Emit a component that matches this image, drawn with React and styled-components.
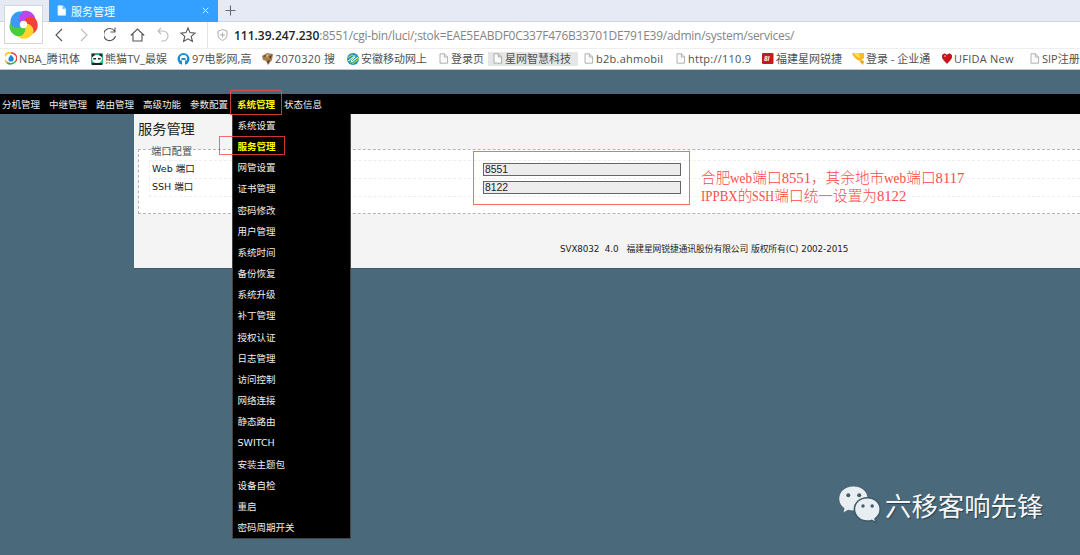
import React from "react";
import styled, { createGlobalStyle } from "styled-components";

const GlobalStyle = createGlobalStyle`
  * {
    box-sizing: border-box;
  }

  body {
    margin: 0;
    overflow: hidden;
    background: #4a6a7b;
  }
`;

const uiFont = `"Open Sans", "Noto Sans CJK SC", sans-serif`;
const pageFont = `"DejaVu Sans", "Noto Sans CJK SC", sans-serif`;

const Screen = styled.div`
  position: relative;
  width: 1080px;
  height: 555px;
  overflow: hidden;
  white-space: nowrap;
  color: #222;
  font-family: ${pageFont};
`;

/* ---------- browser chrome ---------- */

const Chrome = styled.header`
  height: 70px;
  background: #fff;
  border-bottom: 1px solid #bfc7cc;
  font-family: ${uiFont};
`;

const TabStrip = styled.div`
  display: flex;
  align-items: center;
  height: 22px;
  padding-left: 49px;
  background: #e6eaf4;
  border-bottom: 1px solid #d2d6e4;
`;

const Tab = styled.div`
  display: flex;
  align-items: center;
  width: 169px;
  height: 22px;
  padding: 0 9px 0 8px;
  background: #339fff;
  color: #fff;
  font-size: 11px;
`;

const TabTitle = styled.span`
  flex: 1;
  margin-left: 4px;
`;

const NewTab = styled.svg`
  margin-left: 7px;
`;

const BrowserLogo = styled.div`
  position: absolute;
  top: 5px;
  left: 4px;
  display: grid;
  place-items: center;
  width: 39px;
  height: 39px;
  background: #fff;
  border: 1px solid #d4d7dc;
`;

const AddressRow = styled.div`
  display: flex;
  align-items: center;
  height: 27px;
  padding-left: 53px;
  border-bottom: 1px solid #eeeeee;
`;

const NavButtons = styled.div`
  display: flex;
  align-items: center;
  width: 155px;
  height: 26px;
  border-right: 1px solid #e4e4e4;
`;

const Address = styled.div`
  display: flex;
  align-items: center;
  padding-left: 9px;
  color: #858585;
  font-size: 12px;
  letter-spacing: -0.26px;

  b {
    margin-left: 6px;
    color: #222;
    font-weight: 600;
    letter-spacing: 0;
  }
`;

const Bookmarks = styled.div`
  display: flex;
  align-items: center;
  height: 20px;
  padding-left: 5px;
`;

const Bookmark = styled.div`
  display: flex;
  align-items: center;
  flex: none;
  width: ${(p) => p.$width}px;
  height: 20px;
  color: #505050;
  font-size: 11px;
  line-height: 18px;
  padding-bottom: 1px;
  letter-spacing: ${(p) => p.$spacing || 0}px;

  svg {
    flex: none;
    margin-right: 2px;
  }
`;

const ActiveMark = styled.div`
  display: flex;
  align-items: center;
  height: 14px;
  width: 90px;
  margin-left: -5px;
  padding-left: 5px;
  background: #e6e6e6;
`;

/* ---------- admin page ---------- */

const NavBar = styled.nav`
  display: flex;
  align-items: center;
  height: 20px;
  margin-top: 24px;
  padding: 1px 0 0 2px;
  background: #000;
  color: #eee;
  font-size: 9.5px;
`;

const NavItem = styled.div`
  position: relative;
  width: 47px;
  line-height: 19px;
  color: ${(p) => (p.$active ? "#ffff00" : "#eee")};
  font-weight: ${(p) => (p.$active ? 700 : 400)};
`;

const Dropdown = styled.div`
  position: absolute;
  top: 19px;
  left: -5px;
  z-index: 2;
  width: 119px;
  height: 425px;
  border: 1px solid #444;
  border-top: 0;
  background: #000;
`;

const MenuItem = styled.div`
  height: 21.17px;
  padding: 1px 0 0 4.5px;
  line-height: 21px;
  font-weight: ${(p) => (p.$active ? 700 : 400)};
  color: ${(p) => (p.$active ? "#ffff00" : "#eee")};
`;

const Content = styled.main`
  height: 155px;
  margin-left: 134px;
  padding-left: 4px;
  background: #f4f4f4;
  border-bottom: 1px solid #3f5967;
`;

const Title = styled.h1`
  height: 35px;
  margin: 0;
  line-height: 30px;
  font-size: 14.2px;
  font-weight: 400;
`;

const Section = styled.section`
  height: 65px;
  padding: 0 0 0 10px;
  border: 1px dashed #b4b4b4;
  border-right: 0;
  background: #fff;
`;

const Legend = styled.div`
  height: 10px;
  padding-left: 2px;
  line-height: 2px;
  color: #555;
  font-size: 10.3px;
`;

const Row = styled.div`
  display: grid;
  grid-template-columns: 331px 198px;
  align-items: center;
  height: 18px;
  padding-left: 2px;
  border-top: 1px dashed #eeeeee;
  border-left: 1px dashed #eeeeee;
  font-size: 9.5px;

  &:last-child {
    height: 19px;
    border-bottom: 1px dashed #eeeeee;
  }

  span {
    padding-bottom: 3px;
  }
`;

const Field = styled.input`
  width: 198px;
  height: 13px;
  padding: 0 0 1px 1px;
  border: 1px solid #666;
  border-radius: 0;
  background: #ededed;
  color: #222;
  font: 10.4px "Liberation Sans", sans-serif;
`;

const Footer = styled.footer`
  display: flex;
  padding: 28px 0 0 422px;
  font-size: 8.8px;
  letter-spacing: -0.1px;
  line-height: 14px;
  white-space: pre;
`;

/* ---------- notes drawn over the page ---------- */

const MarkBox = styled.div`
  position: absolute;
  z-index: 3;
  top: ${(p) => p.$top}px;
  left: ${(p) => p.$left}px;
  width: ${(p) => p.$width}px;
  height: ${(p) => p.$height}px;
  border: 1px solid rgba(250, 70, 70, 0.8);
`;

const Note = styled.div`
  position: absolute;
  top: 169px;
  left: 701px;
  color: #ff4a4a;
  font-family: "Liberation Serif", "Noto Sans CJK SC", serif;
  font-size: 14.67px;
  font-weight: 300;
  line-height: 18px;
`;

/* half-width letters: squeezed so that each one takes half an em */
const Latin = styled.span`
  display: inline-block;
  width: ${(p) => p.$width}px;
  transform: scaleX(${(p) => p.$scale});
  transform-origin: left;
`;

const Watermark = styled.div`
  position: absolute;
  top: 485px;
  left: 838px;
  display: flex;
  align-items: center;
  height: 39px;
  gap: 4px;
  color: #f4f6f7;
  font-family: "Noto Sans CJK SC", sans-serif;
  font-size: 26.4px;
  text-shadow: 1px 1px 1px #2c404b;
`;

/* ---------- icons ---------- */

const petalColors = ["#bb45ee", "#f5413c", "#ffd52e", "#48ce3b", "#3c9af5"];

const Pinwheel = () => (
  <svg width="31" height="31" viewBox="-16 -16 32 32">
    {petalColors.map((color, i) => (
      <path
        key={color}
        d="M-3.500 -1C-9 -5 -8 -14 1 -14.500C8 -14.500 11 -10 11.500 -6C7 -8.500 3 -7 0 -3.500Z"
        fill={color}
        transform={`rotate(${i * 72 + 8})`}
      />
    ))}
    <circle r="3.800" fill="#fff" />
  </svg>
);

const PageIcon = ({ filled }) => (
  <svg width="10" height="11" viewBox="0 0 10 11">
    <path
      d="M1 .8h4.5L8.6 4v6.2H1z M5.4 .8V4h3.2"
      fill={filled ? "#fff" : "#fafafa"}
      stroke={filled ? "#cfe6fb" : "#a8a8a8"}
      strokeWidth=".9"
    />
  </svg>
);

const Line = ({ width, d, color = "#555", offset = 0 }) => (
  <svg width={width} height="18" viewBox={`${-offset} 0 ${width} 18`}>
    <path d={d} fill="none" stroke={color} strokeWidth="1.1" />
  </svg>
);

const bookmarkIcons = {
  page: <PageIcon />,
  nba: (
    <svg width="12" height="13" viewBox="0 0 12 13">
      <path d="M6 1A5.2 5.2 0 0 0 2 10.5" fill="none" stroke="#f5c21b" strokeWidth="1.6" />
      <path d="M6 1a5.2 5.2 0 0 1 4 9" fill="none" stroke="#e5493a" strokeWidth="1.4" />
      <path d="M2 10.5q4 3 8 -.5" fill="none" stroke="#35a853" strokeWidth="1.6" />
      <path d="M6 3C9 5 9.5 8 7.500 9.500H4.500C2.500 8 3.500 5 6 3z" fill="#1787d8" />
    </svg>
  ),
  panda: (
    <svg width="12" height="12" viewBox="0 0 12 12">
      <rect width="12" height="12" rx="1" fill="#23b989" />
      <circle cx="2.500" cy="2.500" r="1.800" fill="#222" />
      <circle cx="9.500" cy="2.500" r="1.800" fill="#222" />
      <path d="M1 6.500q0-4.500 5-4.500t5 4.500q-1 3.500-5 3.500T1 6.500" fill="#fff" />
      <path d="M2.500 5h2.500v1.500H2.200zM7 5h2.500l.3 1.500H7zM1 10h10v2H1z" fill="#222" />
    </svg>
  ),
  film: (
    <svg width="13" height="12" viewBox="0 0 13 12">
      <circle cx="6.500" cy="6" r="6" fill="#168fd5" />
      <path d="M3 7V5q0-3 3.500-3T10 5v2L8.500 8V5h-4v3z" fill="#fff" />
      <path d="M5 7h3v5H5z" fill="#fff" />
    </svg>
  ),
  search: (
    <svg width="11" height="12" viewBox="0 0 11 12">
      <path d="M0 3l5-3 6 1-1 6-4 5-2-4-3-1z" fill="#a87d48" />
      <path d="M1 3l3-1-1 2zM7 3.500l3-1.500-1.500 4zM5 8l3-1-2 4z" fill="#444" />
      <path d="M4 2l3-1-2 4z" fill="#e9bd69" />
    </svg>
  ),
  mobile: (
    <svg width="12" height="12" viewBox="0 0 12 12">
      <circle cx="6" cy="6" r="6" fill="#168bd3" />
      <path d="M0 5l5-3 3 1-6 5M3 10l7-5 2 1-7 5" fill="none" stroke="#8bd14d" strokeWidth="1.500" />
      <path d="M1 8l5-4h2L4 8l1 1 6-5" fill="none" stroke="#fff" strokeWidth=".9" />
    </svg>
  ),
  ruijie: (
    <svg width="12" height="11" viewBox="0 0 12 11">
      <rect width="11.500" height="11" rx="1" fill="#c9191e" />
      <text x="2" y="8" fill="#fff" fontSize="6.500" fontWeight="700" fontStyle="italic">
        8i
      </text>
    </svg>
  ),
  trophy: (
    <svg width="12" height="12" viewBox="0 0 12 12">
      <path d="M0 0h12v5L8 8Q2 6 0 0z" fill="#ffb91e" />
      <path d="M2 0h5l1 5Q4 4 2 0" fill="#ffdf59" />
      <path d="M9 7l3 1-1 4-3-3z" fill="#e6a52f" />
    </svg>
  ),
  heart: (
    <svg width="10" height="11" viewBox="0 0 10 11">
      <path
        d="M5 10.500Q-1 5 .3 2.300 2 -.7 5 2.200 8-.7 9.700 2.300 11 5 5 10.500"
        fill="#d50f18"
        stroke="#6d1014"
        strokeWidth=".6"
      />
      <circle cx="3" cy="3" r="1" fill="#ff8888" />
    </svg>
  ),
};

const WeChat = () => (
  <svg width="43" height="39" viewBox="0 0 43 39">
    <g fill="#e8eef1" stroke="#405c6a" strokeWidth=".8">
      <path d="M15.500 1C7 1 .8 6.600 .8 13.700c0 4 2 7.400 5.300 9.700l-1.400 4.800 5.500-3c1.700.5 3.500.7 5.300.7C24 25.900 30 20.500 30 13.700S24 1 15.500 1z" />
      <path
        d="M29.300 12.700c-7.300 0-12.900 5-12.900 11.600s5.600 11.700 12.900 11.700c1.500 0 3-.2 4.300-.6l4.700 2.400-1.300-4c3.200-2.200 5.200-5.500 5.200-9.500 0-6.600-5.600-11.600-12.900-11.600z"
        strokeWidth="1.600"
      />
    </g>
    <g fill="#405c6a">
      <circle cx="10.300" cy="10.300" r="2" />
      <circle cx="21.200" cy="10.300" r="2" />
      <circle cx="25" cy="21" r="1.700" />
      <circle cx="34.200" cy="21" r="1.700" />
    </g>
  </svg>
);

/* ---------- data ---------- */

const bookmarks = [
  { icon: "nba", label: "NBA_腾讯体", width: 86, spacing: 0.15 },
  { icon: "panda", label: "熊猫TV_最娱", width: 86, spacing: 0.1 },
  { icon: "film", label: "97电影网,高", width: 85 },
  { icon: "search", label: "2070320 搜", width: 85, spacing: 0.25 },
  { icon: "mobile", label: "安徽移动网上", width: 92 },
  { icon: "page", label: "登录页", width: 54 },
  { icon: "page", label: "星网智慧科技", width: 91, active: true },
  { icon: "page", label: "b2b.ahmobil", width: 92, spacing: 0.25 },
  { icon: "page", label: "http://110.9", width: 86, spacing: 0.25 },
  { icon: "ruijie", label: "福建星网锐捷", width: 90 },
  { icon: "trophy", label: "登录 - 企业通", width: 90 },
  { icon: "heart", label: "UFIDA New", width: 88, spacing: 0.25 },
  { icon: "page", label: "SIP注册", width: 70 },
];

const navItems = ["分机管理", "中继管理", "路由管理", "高级功能", "参数配置", "系统管理", "状态信息"];

const menuItems = [
  "系统设置",
  "服务管理",
  "网管设置",
  "证书管理",
  "密码修改",
  "用户管理",
  "系统时间",
  "备份恢复",
  "系统升级",
  "补丁管理",
  "授权认证",
  "日志管理",
  "访问控制",
  "网络连接",
  "静态路由",
  "SWITCH",
  "安装主题包",
  "设备自检",
  "重启",
  "密码周期开关",
];

const ports = [
  { label: "Web 端口", value: "8551" },
  { label: "SSH 端口", value: "8122" },
];

const BrowserChrome = () => (
  <Chrome>
    <TabStrip>
      <Tab>
        <PageIcon filled />
        <TabTitle>服务管理</TabTitle>
        <svg width="7" height="7" viewBox="0 0 7 7">
          <path d="M.7.7l5.600 5.600M6.300.7L.7 6.300" stroke="#d9edff" />
        </svg>
      </Tab>
      <NewTab width="11" height="11" viewBox="0 0 11 11">
        <path d="M5.500.5v10M.5 5.500h10" stroke="#686c75" strokeWidth="1.100" />
      </NewTab>
    </TabStrip>
    <BrowserLogo>
      <Pinwheel />
    </BrowserLogo>
    <AddressRow>
      <NavButtons>
        <Line width={27} d="M9 3L3 9l6 6" />
        <Line width={24} d="M1 3l6 6-6 6" color="#bbb" />
        <Line width={26} d="M10.500 5A6 6 0 1 0 11.500 10M11 1.500V6H6.500" />
        <Line width={27} d="M.8 9.500L7.500 3l6.700 6.500M3 8v7h9V8" />
        <Line width={22} d="M4 2L1 5l3 3M1 5h5a5 5 0 0 1 0 10H4" color="#bbb" />
        <Line width={22} d="M9 2l2 4.600 5 .5-3.800 3.300 1.200 5L9 12.800l-4.400 2.600 1.200-5L2 7.100l5-.5z" />
      </NavButtons>
      <Address>
        <svg width="11" height="12" viewBox="0 0 11 12">
          <path
            d="M5.500 .6L10 2v4.500q0 3-4.500 5Q1 9.500 1 6.500V2zM5.500 3.500v5M3 6h5"
            fill="none"
            stroke="#a5a5a5"
            strokeWidth=".9"
          />
        </svg>
        <b>111.39.247.230</b>
        <span>:8551/cgi-bin/luci/;stok=EAE5EABDF0C337F476B33701DE791E39/admin/system/services/</span>
      </Address>
    </AddressRow>
    <Bookmarks>
      {bookmarks.map(({ icon, label, width, spacing, active }) => (
        <Bookmark key={label} $width={width} $spacing={spacing}>
          {active ? (
            <ActiveMark>
              {bookmarkIcons[icon]}
              {label}
            </ActiveMark>
          ) : (
            <>
              {bookmarkIcons[icon]}
              {label}
            </>
          )}
        </Bookmark>
      ))}
    </Bookmarks>
  </Chrome>
);

const App = () => (
  <>
    <GlobalStyle />
    <Screen>
      <BrowserChrome />
      <NavBar>
        {navItems.map((name) => (
          <NavItem key={name} $active={name === "系统管理"}>
            {name}
            {name === "系统管理" && (
              <Dropdown>
                {menuItems.map((item) => (
                  <MenuItem key={item} $active={item === "服务管理"}>
                    {item}
                  </MenuItem>
                ))}
              </Dropdown>
            )}
          </NavItem>
        ))}
      </NavBar>
      <Content>
        <Title>服务管理</Title>
        <Section>
          <Legend>端口配置</Legend>
          {ports.map(({ label, value }) => (
            <Row key={label}>
              <span>{label}</span>
              <Field defaultValue={value} />
            </Row>
          ))}
        </Section>
        <Footer>{"SVX8032  4.0   福建星网锐捷通讯股份有限公司 版权所有(C) 2002-2015"}</Footer>
      </Content>
      <MarkBox $left={230} $top={90} $width={52} $height={25} />
      <MarkBox $left={219} $top={136} $width={66} $height={19} />
      <MarkBox $left={473} $top={151} $width={217} $height={54} />
      <Note>
        合肥
        <Latin $width={22} $scale={0.9}>web</Latin>
        端口8551，其余地市
        <Latin $width={22} $scale={0.9}>web</Latin>
        端口8117
        <br />
        <Latin $width={36.7} $scale={0.88}>IPPBX</Latin>的
        <Latin $width={22} $scale={0.82}>SSH</Latin>
        端口统一设置为8122
      </Note>
      <Watermark>
        <WeChat />
        六移客响先锋
      </Watermark>
    </Screen>
  </>
);

export default App;
